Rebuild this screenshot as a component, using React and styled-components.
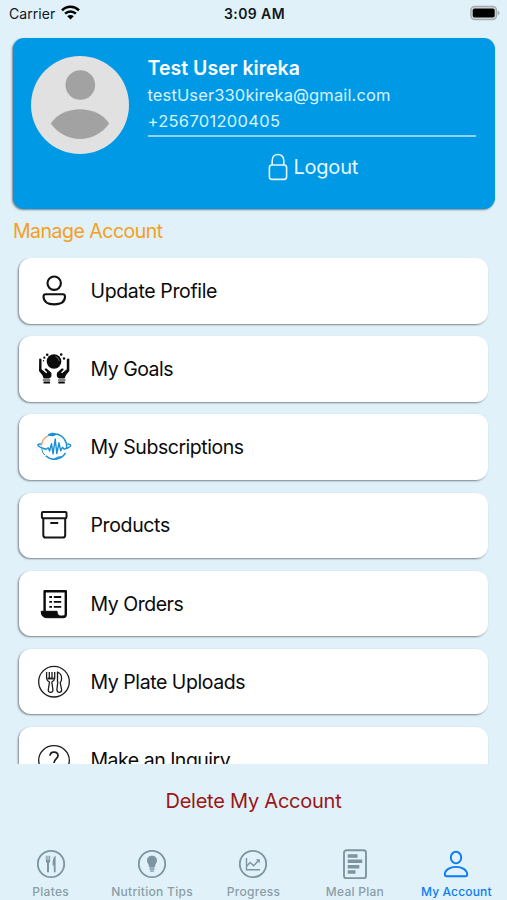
import React from "react";
import styled, { createGlobalStyle } from "styled-components";

const GlobalStyle = createGlobalStyle`
    body{
        margin: 0;
        padding: 0;
        background: #e0f1fa;
        font-family: Inter, "Liberation Sans", sans-serif;
    }

    *{
        box-sizing: border-box;
    }
`;

const Screen = styled.div`
    height: 900px;
    display: flex;
    flex-direction: column;
    background: #e0f1fa;
    overflow: hidden;
`;

const StatusBar = styled.header`
    height: 37.5px;
    display: grid;
    grid-template-columns: 1fr auto 1fr;
    align-items: start;
    padding: 5px 7px 0 9px;
    color: #10181c;
    font-size: 14px;
    line-height: 18px;
`;

const Carrier = styled.div`
    display: flex;
    gap: 6px;
    letter-spacing: 0.06px;
`;

const Clock = styled.div`
    font-weight: 600;
    letter-spacing: 0.4px;
`;

const Battery = styled.div`
    display: flex;
    justify-content: flex-end;
`;

const ProfileCard = styled.section`
    height: 171px;
    margin: 0 12.5px;
    padding: 18px 18.5px;
    display: flex;
    align-items: flex-start;
    gap: 18.5px;
    border-radius: 11px;
    background: #0099e5;
    color: #fff;
    box-shadow: -1px 1px 2px rgba(0, 0, 0, 0.45);
`;

const Details = styled.div`
    flex: 1;
    display: flex;
    flex-direction: column;
`;

const UserName = styled.h1`
    margin: 0;
    font-size: 19.5px;
    line-height: 24px;
    font-weight: 600;
    letter-spacing: 0.03px;
`;

const Contact = styled.p`
    margin: 0;
    padding-top: 2px;
    height: ${props => props.$height}px;
    font-size: 16.5px;
    line-height: 26px;
    letter-spacing: ${props => props.$spacing}px;
    color: #d9f3ff;
`;

const Logout = styled.button`
    height: 62px;
    padding: 0 0 0 3px;
    border: none;
    border-top: solid 2px #8fd2f5;
    background: none;
    display: flex;
    justify-content: center;
    align-items: center;
    gap: 5px;
    color: #e6f7ff;
    font-family: inherit;
    font-size: 20px;
    letter-spacing: -0.2px;
`;

const SectionTitle = styled.h2`
    margin: 0 0 0 13px;
    height: 49px;
    padding-top: 10px;
    color: #f59f1c;
    font-size: 19.5px;
    font-weight: 400;
    line-height: 25px;
    letter-spacing: -0.5px;
`;

const Menu = styled.main`
    height: 506px;
    padding: 0.5px 19px 0 19px;
    display: flex;
    flex-direction: column;
    gap: 12.7px;
    overflow: hidden;
`;

const MenuItem = styled.div`
    flex: 0 0 65.5px;
    display: flex;
    align-items: center;
    padding-left: 15px;
    gap: 16.5px;
    border-radius: 12px;
    background: #fff;
    box-shadow: -1px 1px 2px rgba(0, 0, 0, 0.45);

    svg{
        flex: none;
    }
`;

const MenuLabel = styled.span`
    color: #0a0a0a;
    font-size: 19.5px;
    line-height: 26px;
    letter-spacing: ${props => props.$spacing}px;
`;

const DeleteAccount = styled.button`
    height: 75px;
    padding: 0;
    border: none;
    background: none;
    color: #9b1515;
    font-family: inherit;
    font-size: 20px;
    letter-spacing: -0.24px;
`;

const TabBar = styled.nav`
    flex: 1;
    display: grid;
    grid-template-columns: repeat(5, 1fr);
    padding-top: 10px;
`;

const Tab = styled.div`
    display: flex;
    flex-direction: column;
    align-items: center;
    gap: 5px;
    color: ${props => props.$active ? "#0a7cf5" : "#7c959f"};
`;

const TabLabel = styled.span`
    font-size: 12px;
    line-height: 16px;
    font-weight: 500;
    letter-spacing: ${props => props.$spacing}px;
    white-space: nowrap;
    color: ${props => props.$active ? "#0a7cf5" : "#8a9da6"};
`;

const WifiIcon = () => (
    <svg width="19" height="15" viewBox="0 0 19 15" fill="none" stroke="#000" strokeWidth="2.5">
        <path d="M1 5.3C5.8 0.6 13.2 0.6 18 5.3" />
        <path d="M4.1 8.6C7.2 5.7 11.8 5.7 14.9 8.6" />
        <path d="M9.5 14.6L6.2 11.2C8.1 9.5 10.9 9.5 12.8 11.2Z" fill="#000" stroke="none" />
    </svg>
);

const BatteryIcon = () => (
    <svg width="30" height="16" viewBox="0 0 30 16">
        <rect x="0.9" y="1.4" width="25.6" height="13.2" rx="4" fill="#d5dde0" stroke="#a3abae" strokeWidth="1.5" />
        <rect x="2.7" y="3.4" width="22" height="9.2" rx="1.8" fill="#000" />
        <path d="M27.8 5.7C30.1 6.5 30.1 9.5 27.8 10.3Z" fill="#a3abae" />
    </svg>
);

const Avatar = () => (
    <svg width="98" height="98" viewBox="0 0 98 98">
        <circle cx="49" cy="49" r="49" fill="#e1e1e1" />
        <circle cx="49.3" cy="29" r="14.8" fill="#a2a2a2" />
        <path d="M19.8 67.5C32 48.5 66 48.5 78.2 67.5C64 88 34 88 19.8 67.5Z" fill="#a2a2a2" />
    </svg>
);

const LockIcon = () => (
    <svg width="20" height="28" viewBox="0 0 20 28" fill="none" stroke="#e6f7ff" strokeWidth="1.6">
        <rect x="1.4" y="12" width="17.2" height="14.4" rx="2.6" />
        <path d="M4.2 12V7.4C4.2 -0.5 15.8 -0.5 15.8 7.4V12" />
    </svg>
);

const ProfileIcon = () => (
    <svg width="40" height="40" viewBox="0 0 40 40" fill="none" stroke="#111" strokeWidth="2.1">
        <circle cx="20.2" cy="12.2" r="6.7" />
        <path d="M11.8 23.3H28.7Q31 23.3 31 25.6C31 30.5 27 33.4 20.2 33.4S9.5 30.5 9.5 25.6Q9.5 23.3 11.8 23.3Z" />
    </svg>
);

const GoalsIcon = () => (
    <svg width="40" height="40" viewBox="0 0 40 40" fill="#0b0b0b">
        <circle cx="20" cy="12.5" r="7.3" />
        <path d="M21.5 7.3Q25 8.6 25.3 12" fill="none" stroke="#777" strokeWidth="0.9" />
        <circle cx="13.2" cy="5.8" r="1.3" />
        <circle cx="27.2" cy="5.5" r="1.3" />
        <circle cx="10.3" cy="8.7" r="1.1" />
        <circle cx="30" cy="9.5" r="1.2" />
        <circle cx="9.5" cy="11.7" r="0.7" />
        <path d="M5.2 9.8Q6.6 9 7.5 10.4V20.2L12.3 24.2L13.2 23.2L10.7 20.8Q10.4 19 12.6 19.5L17.3 23.8Q18.3 28.8 15 29.4H9.7L8.4 26.2L5 22Z" />
        <path d="M35.3 9.8Q33.7 9 32.8 10.4V20.2L28 24.2L27.1 23.2L29.6 20.8Q29.9 19 27.7 19.5L23 23.8Q22 28.8 25.3 29.4H30.6L31.9 26.2L35.3 22Z" />
        <path d="M8.8 30H16.2V32H8.8ZM24.1 30H31.5V32H24.1Z" fill="#888" />
        <path d="M9.5 32.6H16V34.6H9.5ZM24.3 32.6H30.8V34.6H24.3Z" />
    </svg>
);

const SubscriptionsIcon = () => (
    <svg width="40" height="40" viewBox="0 0 40 40" fill="none" stroke="#198fd3" strokeWidth="1.5">
        <path d="M11.7 28.8A12.8 12.8 0 0 0 31.5 25.8" />
        <path d="M22.5 7.1A12.8 12.8 0 0 1 32.6 21.2" />
        <path d="M15.2 8.1A12.8 12.8 0 0 0 7.4 18.7" stroke="#eea36f" />
        <path d="M14 7.8Q18.2 4.7 22.7 7.2Q18.7 10.3 14 7.8Z" fill="#198fd3" strokeWidth="1" />
        <path d="M19 32.7Q22.3 29.7 27.2 29.3Q25 32.6 19 32.7Z" fill="#3fa5dc" strokeWidth="0.7" />
        <path d="M7 17Q2.8 16.7 4.3 18.8Q6.2 20.9 12.2 22.3L14.2 20.8L15.6 24L17.5 16.8L19 26.8L21.2 12L22.8 26.5L25 15.8L26.7 23.8L28.4 20.3L30.2 22.2Q37.2 20 36.7 18.1Q36.2 17 33.2 17" strokeWidth="1.4" strokeLinejoin="round" />
        <path d="M7.7 21.8Q8 25.4 10.7 28" strokeWidth="1" />
    </svg>
);

const ProductsIcon = () => (
    <svg width="40" height="40" viewBox="0 0 40 40" fill="none" stroke="#151515" strokeWidth="2" strokeLinejoin="round">
        <rect x="7.9" y="7" width="24.6" height="6.2" rx="1" />
        <path d="M9.3 13.2V29.9Q9.3 32.5 11.9 32.5H28.6Q31.2 32.5 31.2 29.9V13.2" />
        <path d="M16.3 18H24.2" />
    </svg>
);

const OrdersIcon = () => (
    <svg width="40" height="40" viewBox="0 0 40 40">
        <path d="M10.6 27V7.2H31.8V30.2Q31.8 33 28.9 33" fill="none" stroke="#0b0b0b" strokeWidth="2.4" strokeLinejoin="round" />
        <path d="M7.2 27.3H23Q23.2 32.5 27.5 32H30L29 33.7H13Q7.2 33.7 7.2 27.3Z" fill="#0b0b0b" stroke="#0b0b0b" />
        <path d="M15.3 13H18M19.8 13H27.2M15.3 17.9H18M19.8 17.9H27.2M15.3 22.8H18M19.8 22.8H27.2" stroke="#0b0b0b" strokeWidth="1.8" />
    </svg>
);

const PlateIcon = () => (
    <svg width="40" height="40" viewBox="0 0 40 40" fill="none" stroke="#1c1c1c" strokeWidth="1.3" strokeLinejoin="round">
        <circle cx="20" cy="19.7" r="15.3" />
        <path d="M12.6 10V16.4Q13.1 19.1 15.5 20L14.3 27.5Q14 30.3 16.6 30.3T18.9 27.5L17.8 20Q20.2 19.1 20.7 16.4V10M15.3 10V16M18 10V16" />
        <path d="M13.5 16.5H19.8" strokeWidth="1.9" />
        <path d="M23.5 20V10Q27.8 11.6 27.6 16.8Q27.5 19.2 26.2 20.7L27.6 27.7Q27.6 30.3 25.4 30.3T22.9 27.7L23.8 20Z" />
    </svg>
);

const InquiryIcon = () => (
    <svg width="40" height="40" viewBox="0 0 40 40" fill="none" stroke="#1c1c1c" strokeWidth="1.3">
        <ellipse cx="20" cy="20.2" rx="15.3" ry="14.5" />
        <path d="M16 15.7Q16.3 12.1 20.1 12.2Q24 12.3 24 15.7C24 18.5 20 18.8 20 23" strokeWidth="1.7" />
        <circle cx="20" cy="26.5" r="0.6" />
    </svg>
);

const PlatesTabIcon = () => (
    <svg width="30" height="30" viewBox="0 0 30 30" fill="currentColor">
        <circle cx="15" cy="15" r="13.2" fill="none" stroke="currentColor" strokeWidth="1.8" />
        <path d="M9.8 6.8H10.7V11H11.4V6.8H12.5V11H13.2V6.8H14.2V11.8Q14 13.5 13 14V22.5Q13 23.5 12 23.5T11 22.5V14Q9.9 13.5 9.8 11.8Z" />
        <path d="M19.6 6.5V22.6Q19.6 23.5 18.7 23.5T17.8 22.6V16.5H16.6Q16.2 8.5 19.6 6.5Z" />
    </svg>
);

const TipsTabIcon = () => (
    <svg width="30" height="30" viewBox="0 0 30 30" fill="currentColor">
        <circle cx="15" cy="15" r="13.2" fill="none" stroke="currentColor" strokeWidth="1.8" />
        <path d="M15 6.8C18 6.8 20 8.9 20 11.5C20 14 18.2 15 17.8 18H12.2C11.8 15 10 14 10 11.5C10 8.9 12 6.8 15 6.8Z" />
        <path d="M12.5 18H17.5V21.2H12.5Z" opacity="0.7" />
        <path d="M13.2 21.2H16.8V23H13.2Z" opacity="0.7" />
    </svg>
);

const ProgressTabIcon = () => (
    <svg width="30" height="30" viewBox="0 0 30 30" fill="none" stroke="currentColor" strokeWidth="1.4">
        <circle cx="15" cy="15" r="13.2" strokeWidth="1.8" />
        <path d="M8.5 9V20.7H22" />
        <path d="M8.8 17L12.2 13.4L15.6 16.8L20.5 11.5" />
        <path d="M17.8 10.2H21.8V14.2Z" fill="currentColor" stroke="none" />
    </svg>
);

const MealPlanTabIcon = () => (
    <svg width="30" height="30" viewBox="0 0 30 30" fill="none" stroke="currentColor">
        <rect x="4" y="1.3" width="22" height="28" rx="2.5" strokeWidth="1.9" />
        <path d="M7.7 7H17.5M7.7 12.2H22.3M7.7 17.7H19.3M7.7 23H15.5" strokeWidth="3.6" />
    </svg>
);

const AccountTabIcon = () => (
    <svg width="30" height="30" viewBox="0 0 30 30" fill="none" stroke="currentColor" strokeWidth="1.9">
        <ellipse cx="15" cy="8.6" rx="5.2" ry="5.8" />
        <path d="M3.8 25.2C4.1 20.6 9 17.9 15 17.9S25.9 20.6 26.2 25.2Q26.2 27.2 24.4 27.2H5.6Q3.8 27.2 3.8 25.2Z" />
    </svg>
);

const menuItems = [
    { label: "Update Profile", Icon: ProfileIcon, spacing: -0.36 },
    { label: "My Goals", Icon: GoalsIcon, spacing: -0.5 },
    { label: "My Subscriptions", Icon: SubscriptionsIcon, spacing: -0.46 },
    { label: "Products", Icon: ProductsIcon, spacing: -0.36 },
    { label: "My Orders", Icon: OrdersIcon, spacing: -0.48 },
    { label: "My Plate Uploads", Icon: PlateIcon, spacing: -0.44 },
    { label: "Make an Inquiry", Icon: InquiryIcon, spacing: -0.5 },
];

const tabs = [
    { label: "Plates", Icon: PlatesTabIcon, spacing: 0.3 },
    { label: "Nutrition Tips", Icon: TipsTabIcon, spacing: 0.3 },
    { label: "Progress", Icon: ProgressTabIcon, spacing: 0.3 },
    { label: "Meal Plan", Icon: MealPlanTabIcon, spacing: 0.25 },
    { label: "My Account", Icon: AccountTabIcon, spacing: 0.15, active: true },
];

const App = () => {
    return (
        <Screen>
            <GlobalStyle />
            <StatusBar>
                <Carrier>
                    Carrier
                    <WifiIcon />
                </Carrier>
                <Clock>3:09 AM</Clock>
                <Battery>
                    <BatteryIcon />
                </Battery>
            </StatusBar>
            <ProfileCard>
                <Avatar />
                <Details>
                    <UserName>Test User kireka</UserName>
                    <Contact $height={26} $spacing={0.12}>testUser330kireka@gmail.com</Contact>
                    <Contact $height={29} $spacing={0.3}>+256701200405</Contact>
                    <Logout>
                        <LockIcon />
                        Logout
                    </Logout>
                </Details>
            </ProfileCard>
            <SectionTitle>Manage Account</SectionTitle>
            <Menu>
                {menuItems.map(({ label, Icon, spacing }) => (
                    <MenuItem key={label}>
                        <Icon />
                        <MenuLabel $spacing={spacing}>{label}</MenuLabel>
                    </MenuItem>
                ))}
            </Menu>
            <DeleteAccount>Delete My Account</DeleteAccount>
            <TabBar>
                {tabs.map(({ label, Icon, spacing, active }) => (
                    <Tab key={label} $active={active}>
                        <Icon />
                        <TabLabel $active={active} $spacing={spacing}>{label}</TabLabel>
                    </Tab>
                ))}
            </TabBar>
        </Screen>
    )
}

export default App;
